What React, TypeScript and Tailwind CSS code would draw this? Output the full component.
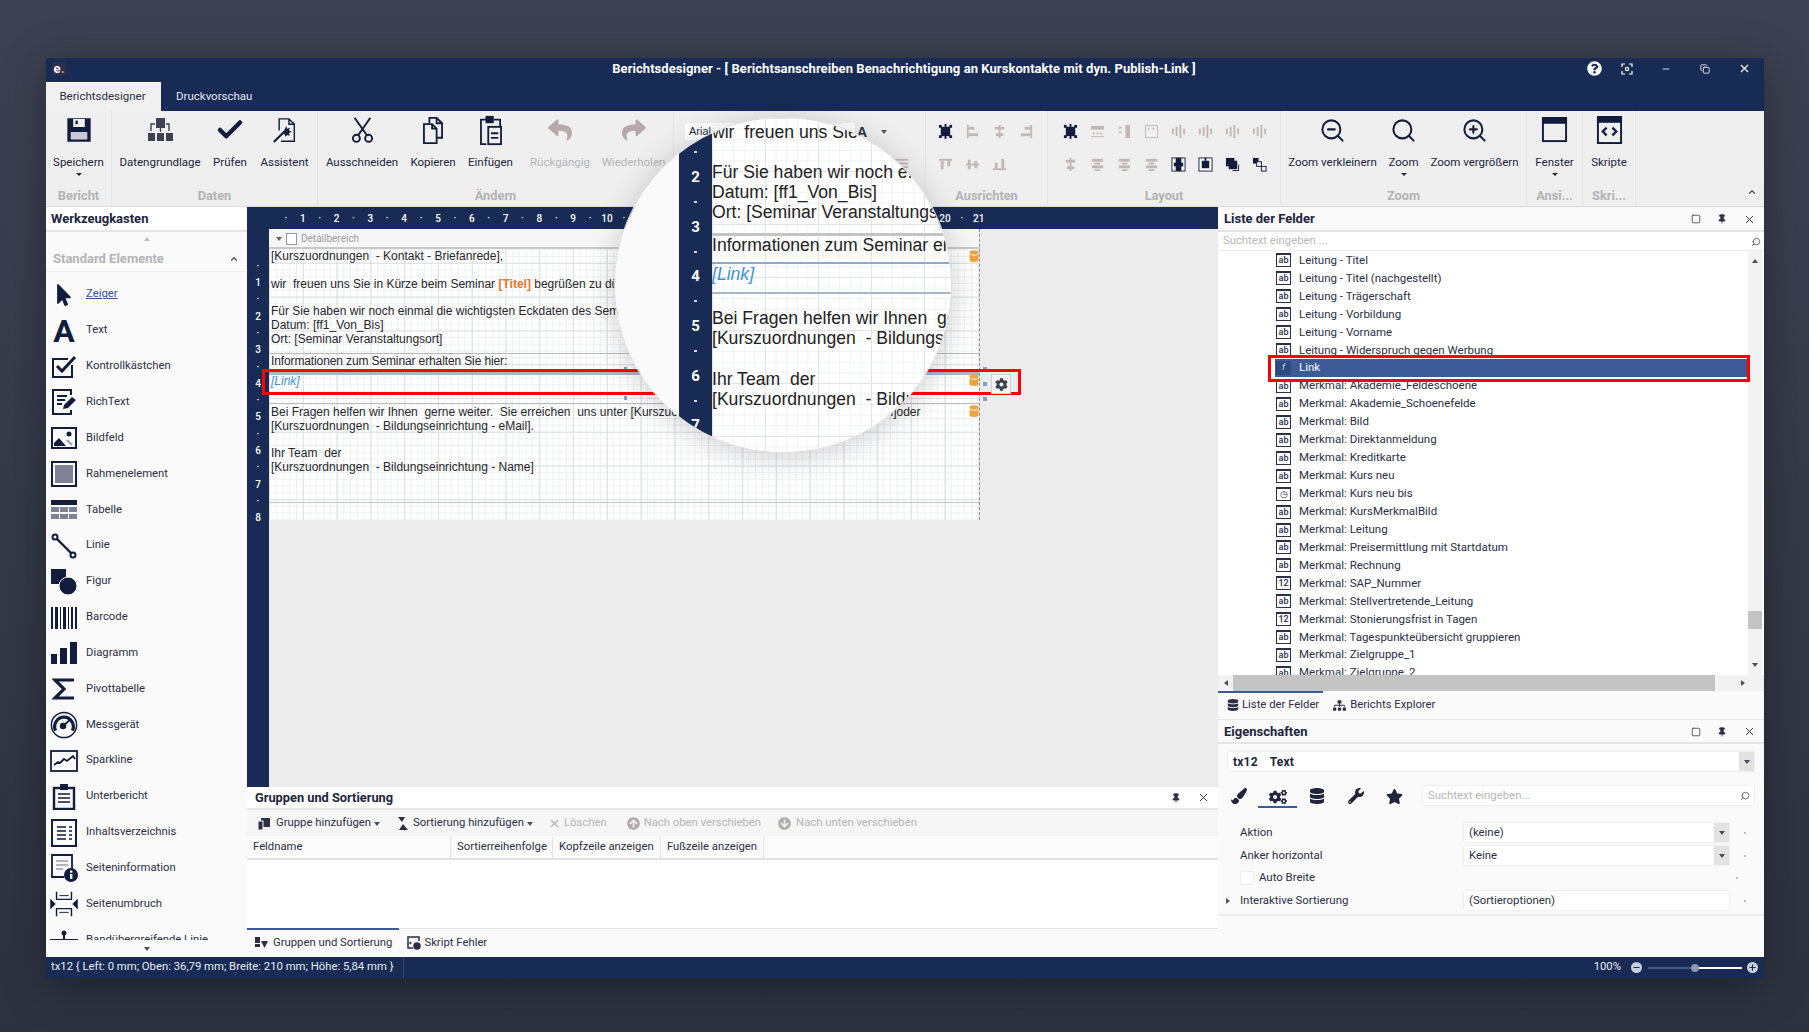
import type { ReactNode } from 'react';
import { Check, Minus, Plus, Search, X, ZoomIn, ZoomOut, Pin, Square, ChevronUp, Copy } from 'lucide-react';
import { FaCog, FaCogs, FaDatabase, FaMousePointer, FaPaintBrush, FaQuestionCircle, FaReply, FaShare, FaStar, FaWrench, FaSitemap, FaArrowCircleUp, FaArrowCircleDown } from 'react-icons/fa';

type R = [number, number, number, number];

// small ribbon glyph built from rects
function Bars({ r, c = '#c2b7b8', frame }: { r: R[]; c?: string; frame?: boolean }) {
  return (
    <svg width="15" height="15" viewBox="0 0 16 16" fill={c} className="shrink-0">
      {frame && <rect x="1" y="1" width="14" height="14" fill="#fff" stroke="#111c3e" />}
      {r.map((b, i) => (
        <rect key={i} x={b[0]} y={b[1]} width={b[2]} height={b[3]} />
      ))}
    </svg>
  );
}

const selIcon: R[] = [[3, 3, 10, 10], [1, 1, 3, 3], [12, 1, 3, 3], [1, 12, 3, 3], [12, 12, 3, 3], [7, 0, 2, 16]];
const hCenter: R[] = [[7, 1, 2, 14], [3, 3, 10, 3], [4, 10, 8, 3]];
const vCenter: R[] = [[1, 7, 14, 2], [3, 3, 3, 10], [10, 4, 3, 8]];
const spread: R[] = [[1, 5, 2, 6], [5, 3, 2, 10], [9, 1, 2, 14], [13, 5, 2, 6]];
const stack: R[] = [[2, 2, 12, 3], [5, 6, 6, 2], [2, 9, 12, 3], [5, 13, 6, 2]];

const ausrichten1: R[][] = [selIcon, [[2, 1, 2, 14], [4, 3, 6, 3], [4, 10, 10, 3]], hCenter, [[12, 1, 2, 14], [6, 3, 6, 3], [2, 10, 10, 3]]];
const ausrichten2: R[][] = [[[1, 2, 14, 2], [3, 4, 3, 9], [10, 4, 3, 6]], vCenter, [[1, 12, 14, 2], [3, 6, 3, 6], [10, 2, 3, 10]]];
const layout1: R[][] = [selIcon, [[1, 2, 14, 4], [3, 9, 2, 2], [7, 9, 2, 2], [11, 9, 2, 2], [1, 13, 14, 1]], [[2, 3, 3, 2], [2, 8, 3, 2], [9, 1, 5, 14]], [[1, 1, 14, 1], [1, 14, 14, 1], [1, 1, 1, 14], [14, 1, 1, 14], [4, 4, 2, 2], [9, 4, 2, 2]], spread, spread, spread, spread];
const layout2: R[][] = [hCenter, stack, stack, stack];

function Floppy() {
  return (
    <svg width="28" height="28" viewBox="0 0 24 24" fill="#111c3e">
      <path fillRule="evenodd" d="M2 2h20v20H2zM7 2.5v7h10v-7zM5 14v6h14v-6z" />
      <rect x="9" y="4" width="2" height="3" />
      <rect x="5" y="14" width="14" height="6" fill="#c9cbd3" />
    </svg>
  );
}
function DataIcon() {
  return (
    <svg width="28" height="28" viewBox="0 0 28 28" fill="#3c4154">
      <rect x="10" y="2" width="9" height="10" />
      <rect x="2" y="17" width="7" height="8" />
      <rect x="11" y="17" width="7" height="8" />
      <rect x="20" y="17" width="7" height="8" />
      <path d="M5 15V8h4M23 15V8h-3M14.5 12v4" fill="none" stroke="#3c4154" strokeWidth="1.4" />
    </svg>
  );
}
function WizardIcon() {
  return (
    <svg width="25" height="27" viewBox="0 0 28 30" fill="none" stroke="#111c3e" strokeWidth="1.6">
      <path d="M8 15V2h11l6 6v19H10M19 2v6h6" />
      <path d="M2 28 14 16" strokeWidth="2.4" />
      <path d="m16 10 1 3 3-1-1 3 3 1-3 2 1 3-3-1-2 2-1-3-3-1 2-2z" fill="#111c3e" stroke="none" />
    </svg>
  );
}
function ScissorsIcon() {
  return (
    <svg width="25" height="28" viewBox="0 0 28 32" fill="none" stroke="#111c3e" strokeWidth="2.2">
      <circle cx="7" cy="25.5" r="4" />
      <circle cx="21" cy="25.5" r="4" />
      <path d="M9 22 23 2M19 22 5 2" />
    </svg>
  );
}
function CopyIcon() {
  return (
    <svg width="24" height="29" viewBox="0 0 26 32" fill="none" stroke="#111c3e" strokeWidth="2">
      <path d="M9 8V2h8l6 6v16h-6" />
      <path d="M3 9h9l5 5v16H3z" fill="#efefef" />
      <path d="M12 9v5h5M17 2v6h6" />
    </svg>
  );
}
function PasteIcon() {
  return (
    <svg width="24" height="31" viewBox="0 0 26 34" fill="none" stroke="#111c3e" strokeWidth="2">
      <path d="M9 5H2v27h6M16 5h7v7" />
      <rect x="8" y="2" width="7" height="6" fill="#111c3e" />
      <rect x="10" y="13" width="14" height="19" fill="#efefef" />
      <path d="M13 20h8M13 25h8" />
    </svg>
  );
}
function WindowIcon({ code }: { code?: boolean }) {
  return (
    <svg width="27" height="31" viewBox="0 0 28 32" fill="none" stroke="#111c3e" strokeWidth="2">
      <rect x="2" y={code ? 2 : 3} width="24" height={code ? 27 : 24} />
      <rect x="2" y={code ? 2 : 3} width="24" height="5" fill="#111c3e" />
      {code && <path d="M11 13l-4 4 4 4M17 13l4 4-4 4" strokeWidth="2.4" />}
    </svg>
  );
}
function FocusIcon() {
  return (
    <svg width="12" height="12" viewBox="0 0 12 12" fill="none" stroke="#fff" strokeWidth="1.2">
      <path d="M1 4V1h3M8 1h3v3M11 8v3H8M4 11H1V8" />
      <circle cx="6" cy="6" r="1.6" />
    </svg>
  );
}

function RibbonBtn({ icon, label, w, off, caret }: { icon: ReactNode; label: string; w: number; off?: boolean; caret?: boolean }) {
  return (
    <div className="flex flex-col items-center shrink-0" style={{ width: w }}>
      <div className="h-[38px] mb-[3px] flex items-center justify-center">{icon}</div>
      <div className={off ? 'text-[11.5px] leading-[20px] whitespace-nowrap text-[#b5b5b8]' : 'text-[11.5px] leading-[20px] whitespace-nowrap text-[#20253c]'}>{label}</div>
      {caret && <div className="w-0 h-0 mt-[1px] border-x-[3px] border-x-transparent border-t-[3px] border-t-[#20253c]" />}
    </div>
  );
}

function Group({ w, label, children, cls }: { w: number; label: string; children: ReactNode; cls?: string }) {
  return (
    <div className="h-full flex flex-col border-r border-[#e6e6e6] shrink-0" style={{ width: w }}>
      <div className={'h-[76px] flex ' + (cls || 'justify-center')}>{children}</div>
      <div className="flex-1 text-center text-[12.8px] font-bold text-[#b3b3b3] leading-[20px] whitespace-nowrap">{label}</div>
    </div>
  );
}

function Tool({ children, label, link }: { children: ReactNode; label: string; link?: boolean }) {
  return (
    <div className="h-[35.85px] flex items-center gap-[8px] pl-[4px] shrink-0">
      <div className="w-[28px] flex justify-center text-[#111c3e]">{children}</div>
      <span className={link ? 'text-[11.3px] text-[#34509c] underline' : 'text-[11.3px] text-[#2b2f45]'}>{label}</span>
    </div>
  );
}

const n = '#111c3e';
const tools: { label: string; icon: ReactNode; link?: boolean }[] = [
  { label: 'Zeiger', link: true, icon: <FaMousePointer size={22} /> },
  { label: 'Text', icon: <span className="text-[32px] leading-none font-bold">A</span> },
  { label: 'Kontrollkästchen', icon: <svg width="26" height="24" viewBox="0 0 26 24" fill="none" stroke={n} strokeWidth="2"><path d="M21 10v12H2V4h15" /><path d="m6 11 5 5L24 2" strokeWidth="3" /></svg> },
  { label: 'RichText', icon: <svg width="26" height="26" viewBox="0 0 26 26" fill="none" stroke={n} strokeWidth="2"><path d="M20 6V1H2v24h18v-4" /><path d="M6 7h10M6 11h8M6 15h5" /><path d="m12 20 1-4 8-8 4 3-8 8z" fill={n} stroke="none" /></svg> },
  { label: 'Bildfeld', icon: <svg width="26" height="22" viewBox="0 0 26 22" fill="none" stroke={n} strokeWidth="2"><rect x="1" y="1" width="24" height="20" /><circle cx="18" cy="7" r="2.5" fill={n} stroke="none" /><path d="M3 19v-3l5-5 7 8z" fill={n} stroke="none" /><path d="m16 13 5 5" stroke="#9a9dab" /></svg> },
  { label: 'Rahmenelement', icon: <svg width="26" height="26" viewBox="0 0 26 26"><rect x="1" y="1" width="24" height="24" fill="#fff" stroke={n} strokeWidth="2" /><rect x="4" y="4" width="18" height="18" fill="#7d8294" /></svg> },
  { label: 'Tabelle', icon: <svg width="26" height="20" viewBox="0 0 26 20" fill="#7d8294"><rect width="26" height="5" fill={n} /><rect y="7" width="8" height="5" /><rect x="9" y="7" width="8" height="5" /><rect x="18" y="7" width="8" height="5" /><rect y="14" width="8" height="5" /><rect x="9" y="14" width="8" height="5" /><rect x="18" y="14" width="8" height="5" /></svg> },
  { label: 'Linie', icon: <svg width="26" height="26" viewBox="0 0 26 26" fill="#fff" stroke={n} strokeWidth="2"><path d="m5 5 16 16" strokeWidth="2.4" /><circle cx="4" cy="4" r="2.5" /><circle cx="22" cy="22" r="2.5" /></svg> },
  { label: 'Figur', icon: <svg width="26" height="26" viewBox="0 0 26 26" fill={n}><rect width="15" height="15" /><circle cx="17" cy="17" r="9" stroke="#fafafa" /></svg> },
  { label: 'Barcode', icon: <svg width="26" height="22" viewBox="0 0 26 22" fill={n}><rect x="0" width="2" height="22" /><rect x="4" width="3" height="22" /><rect x="9" width="1" height="22" /><rect x="12" width="3" height="22" /><rect x="17" width="1" height="22" /><rect x="20" width="2" height="22" /><rect x="24" width="2" height="22" /></svg> },
  { label: 'Diagramm', icon: <svg width="26" height="22" viewBox="0 0 26 22" fill={n}><rect y="12" width="6" height="10" /><rect x="9" y="6" width="7" height="16" /><rect x="19" width="7" height="22" /></svg> },
  { label: 'Pivottabelle', icon: <svg width="24" height="24" viewBox="0 0 24 24" fill="none" stroke={n} strokeWidth="3.2"><path d="M22 3H3l9 9-9 9h19" /></svg> },
  { label: 'Messgerät', icon: <svg width="30" height="30" viewBox="0 0 30 30" fill="none" stroke={n}><circle cx="15" cy="15" r="13.5" strokeWidth="1.6" /><path d="M6 21a10 10 0 1 1 18 0" strokeWidth="3.4" /><circle cx="14" cy="16" r="3.5" fill={n} stroke="none" /><path d="m15 15 7-6" strokeWidth="2" /></svg> },
  { label: 'Sparkline', icon: <svg width="28" height="22" viewBox="0 0 28 22" fill="none" stroke={n} strokeWidth="1.8"><rect x="1" y="1" width="26" height="20" /><path d="m4 15 4-3 2 1 4-4 3 2 6-5 2 3" /></svg> },
  { label: 'Unterbericht', icon: <svg width="24" height="26" viewBox="0 0 24 26" fill="none" stroke={n} strokeWidth="2.4"><rect x="2" y="4" width="20" height="21" /><rect x="8" y="0" width="8" height="6" fill={n} stroke="none" /><path d="M6 10h12M6 14h12M6 18h12" strokeWidth="1.4" /></svg> },
  { label: 'Inhaltsverzeichnis', icon: <svg width="26" height="28" viewBox="0 0 26 28" fill="none" stroke={n} strokeWidth="2"><rect x="1" y="1" width="24" height="26" /><path d="M6 8h9M6 12h9M6 16h9M6 20h9M18 8h3M18 12h3M18 16h3M18 20h3" strokeWidth="1.4" /></svg> },
  { label: 'Seiteninformation', icon: <svg width="28" height="28" viewBox="0 0 28 28" fill="none" stroke={n} strokeWidth="1.8"><path d="M22 15V1H2v22h12" /><path d="M6 7h12M6 11h12M6 15h7" strokeWidth="1.2" stroke="#6b6f82" /><circle cx="21" cy="21" r="7" fill={n} stroke="none" /><rect x="20" y="20" width="2.4" height="5" fill="#fff" stroke="none" /><rect x="20" y="16.5" width="2.4" height="2.2" fill="#fff" stroke="none" /></svg> },
  { label: 'Seitenumbruch', icon: <svg width="30" height="28" viewBox="0 0 30 28" fill="none" stroke={n} strokeWidth="1.5"><path d="M7 1v8h16V1M7 27v-8h16v8" /><path d="M10 5h10M10 23h10" strokeWidth="1" /><path d="m1 10 4 4-4 4zM29 10l-4 4 4 4z" fill={n} /></svg> },
  { label: 'Bandübergreifende Linie', icon: <svg width="28" height="20" viewBox="0 0 28 20" fill={n}><circle cx="14" cy="3" r="2.5" /><rect x="13" y="3" width="2" height="8" /><rect y="9" width="28" height="3" /><rect y="14" width="28" height="3" /></svg> },
];

function AbIcon({ t = 'ab' }: { t?: string }) {
  return (
    <div className="w-[15px] h-[14px] shrink-0 border border-[#2a3048] border-t-[2px] text-[9px] leading-[10px] font-medium text-center text-[#2a3048] bg-white">{t}</div>
  );
}

const fields: { t: string; k?: string; sel?: boolean }[] = [
  { t: 'Leitung - Titel' },
  { t: 'Leitung - Titel (nachgestellt)' },
  { t: 'Leitung - Trägerschaft' },
  { t: 'Leitung - Vorbildung' },
  { t: 'Leitung - Vorname' },
  { t: 'Leitung - Widerspruch gegen Werbung' },
  { t: 'Link', k: 'f', sel: true },
  { t: 'Merkmal: Akademie_Feldeschoene' },
  { t: 'Merkmal: Akademie_Schoenefelde' },
  { t: 'Merkmal: Bild' },
  { t: 'Merkmal: Direktanmeldung' },
  { t: 'Merkmal: Kreditkarte' },
  { t: 'Merkmal: Kurs neu' },
  { t: 'Merkmal: Kurs neu bis', k: '◷' },
  { t: 'Merkmal: KursMerkmalBild' },
  { t: 'Merkmal: Leitung' },
  { t: 'Merkmal: Preisermittlung mit Startdatum' },
  { t: 'Merkmal: Rechnung' },
  { t: 'Merkmal: SAP_Nummer', k: '12' },
  { t: 'Merkmal: Stellvertretende_Leitung' },
  { t: 'Merkmal: Stonierungsfrist in Tagen', k: '12' },
  { t: 'Merkmal: Tagespunkteübersicht gruppieren' },
  { t: 'Merkmal: Zielgruppe_1' },
  { t: 'Merkmal: Zielgruppe_2' },
];

function PanelBtns({ max = true }: { max?: boolean }) {
  return (
    <div className="flex items-center gap-[16px] text-[#2a3048]">
      {max && <Square size={10} strokeWidth={1.8} />}
      <Pin size={10} fill="#2a3048" />
      <X size={13} strokeWidth={1.8} />
    </div>
  );
}

function Tri({ dir, c = '#4a4e5e' }: { dir: 'up' | 'down' | 'left' | 'right'; c?: string }) {
  const cls = {
    up: 'border-x-[3.5px] border-x-transparent border-b-[4px]',
    down: 'border-x-[3.5px] border-x-transparent border-t-[4px]',
    left: 'border-y-[3.5px] border-y-transparent border-r-[4px]',
    right: 'border-y-[3.5px] border-y-transparent border-l-[4px]',
  }[dir];
  return <div className={'w-0 h-0 ' + cls} style={{ borderBottomColor: dir === 'up' ? c : undefined, borderTopColor: dir === 'down' ? c : undefined, borderRightColor: dir === 'left' ? c : undefined, borderLeftColor: dir === 'right' ? c : undefined }} />;
}

function Db() {
  return (
    <svg width="10" height="12" viewBox="0 0 10 12" fill="#f0a23c"><ellipse cx="5" cy="2.5" rx="4.5" ry="2.2" /><path d="M.5 4v6c0 1.200 2 2 4.5 2s4.500-.8 4.500-2V4c-1 1-2.500 1.500-4.500 1.500S1.500 5 .5 4z" /></svg>
  );
}

function Prop({ label, value, caret, indent }: { label: string; value?: string; caret?: boolean; indent?: boolean }) {
  return (
    <div className="h-[23px] flex items-center shrink-0">
      <div className="w-[12px] flex justify-center ml-[4px]">{indent && <Tri dir="right" c="#555" />}</div>
      <div className="w-[230px] pl-[6px] text-[11.4px] text-[#2b2f45]">{label}</div>
      <div className="w-[265px] h-[19px] bg-white shadow-[0_0_2px_#ddd] flex items-center justify-between pl-[5px] text-[11.4px] text-[#2b2f45]">
        {value}
        {caret && <div className="w-[15px] h-full bg-[#e2e2e2] flex items-center justify-center"><Tri dir="down" /></div>}
      </div>
      <div className="w-[2px] h-[2px] rounded-full bg-[#aaa] ml-[15px]" />
    </div>
  );
}

const rulerNums = Array.from({ length: 21 }, (_, i) => i + 1);
const vRuler = [1, 2, 3, 4, 5, 6, 7, 8];

const gridBg = 'bg-white bg-[linear-gradient(#dfe0e4_1px,transparent_1px),linear-gradient(90deg,#dfe0e4_1px,transparent_1px),linear-gradient(#eff0f2_1px,transparent_1px),linear-gradient(90deg,#eff0f2_1px,transparent_1px)] [background-size:33.8px_33.8px,33.8px_33.8px,6.76px_6.76px,6.76px_6.76px]';
const gridBigBg = 'bg-white bg-[linear-gradient(#e2e3e7_1px,transparent_1px),linear-gradient(90deg,#e2e3e7_1px,transparent_1px),linear-gradient(#f1f2f4_1px,transparent_1px),linear-gradient(90deg,#f1f2f4_1px,transparent_1px)] [background-size:53px_53px,53px_53px,10.6px_10.6px,10.6px_10.6px]';

const reportFont = "font-['Liberation_Sans',Arial,sans-serif]";

function Magnifier() {
  const marks: (number | null)[] = [null, 2, null, 3, null, 4, null, 5, null, 6, null, 7, null];
  return (
    <div className="absolute left-[614px] top-[117px] w-[338px] h-[336px] rounded-full overflow-hidden flex border border-[#dcdcdc] shadow-[0_4px_30px_rgba(0,0,0,0.18)] z-20">
      <div className="w-[64px] shrink-0 bg-[#fafafa]" />
      <div className="w-[33px] shrink-0 bg-[#172b55] pt-[22px] flex flex-col text-white font-bold text-[15px]">
        {marks.map((m, i) => (
          <div key={i} className="h-[24.85px] flex items-center justify-center shrink-0">{m ?? <span className="w-[3px] h-[2px] bg-white/80" />}</div>
        ))}
      </div>
      <div className={'flex-1 pt-[4px] text-[17.6px] leading-[20px] text-[#222] whitespace-pre overflow-hidden ' + gridBigBg + ' ' + reportFont}>
        <div className="h-[20px]">wir  freuen uns Sie</div>
        <div className="h-[20px]" />
        <div className="h-[20px]">Für Sie haben wir noch e.</div>
        <div className="h-[20px]">Datum: [ff1_Von_Bis]</div>
        <div className="h-[20px]">Ort: [Seminar Veranstaltungs</div>
        <div className="mt-[11px] h-[3px] bg-[#c4c4c4]" />
        <div className="h-[20px] -mt-[1px]">Informationen zum Seminar er</div>
        <div className="mt-[7px] h-[2px] bg-[#8fa8cc]" />
        <div className="h-[20px] italic text-[#3f92d8]">[Link]</div>
        <div className="mt-[8px] h-[2px] bg-[#a9b5c8]" />
        <div className="mt-[14px] h-[20px]">Bei Fragen helfen wir Ihnen  ge</div>
        <div className="h-[20px]">[Kurszuordnungen  - Bildungse</div>
        <div className="h-[21px]" />
        <div className="h-[20px]">Ihr Team  der</div>
        <div className="h-[20px]">[Kurszuordnungen  - Bildu</div>
      </div>
    </div>
  );
}

export default function App() {
  return (
    <div className="relative w-[1809px] h-[1032px] overflow-hidden pt-[58px] pl-[46px] bg-gradient-to-b from-[#3d4252] to-[#2d3240] font-[Roboto,sans-serif]">
      <div className="w-[1718px] h-[920px] flex flex-col shadow-[0_8px_40px_rgba(0,0,0,0.35)]">
        {/* title + tabs */}
        <div className="h-[53px] bg-[#172b55] shrink-0 flex flex-col">
          <div className="h-[22px] mb-[2px] flex items-center relative">
            <div className="ml-[6px] w-[14px] h-[14px] rounded-[2px] bg-[#2c2f4a] text-white text-[13px] font-bold leading-[13px] text-center">e<span className="text-[#f0a23c]">.</span></div>
            <div className="w-[1676px] text-center text-[13px] font-bold text-white whitespace-nowrap tracking-[0.06px]">Berichtsdesigner - [ Berichtsanschreiben Benachrichtigung an Kurskontakte mit dyn. Publish-Link ]</div>
            <div className="absolute right-[13px] top-[3px] flex items-center text-white">
              <FaQuestionCircle size={15} className="mr-[19.5px]" />
              <FocusIcon />
              <Minus size={10} className="ml-[28px] mr-[29px]" />
              <Copy size={10} className="mr-[28px]" />
              <X size={13} />
            </div>
          </div>
          <div className="h-[29px] flex items-stretch text-[11.5px]">
            <div className="w-[115px] pr-[2px] bg-[#f0f0f0] border-t border-white text-[#2b2f45] flex items-center justify-center">Berichtsdesigner</div>
            <div className="ml-[15px] text-[#e4e7ef] flex items-center">Druckvorschau</div>
          </div>
        </div>

        {/* ribbon */}
        <div className="h-[96px] shrink-0 bg-[#efefef] flex border-b border-[#dcdcdc]">
          <Group w={66} label="Bericht"><RibbonBtn w={52} icon={<Floppy />} label="Speichern" caret /></Group>
          <Group w={206} label="Daten" cls="justify-center gap-[13px]">
            <RibbonBtn w={80} icon={<DataIcon />} label="Datengrundlage" />
            <RibbonBtn w={34} icon={<Check size={30} strokeWidth={3.6} color="#111c3e" />} label="Prüfen" />
            <RibbonBtn w={49} icon={<WizardIcon />} label="Assistent" />
          </Group>
          <Group w={356} label="Ändern" cls="pl-[8px] gap-[13px]">
            <RibbonBtn w={72} icon={<ScissorsIcon />} label="Ausschneiden" />
            <RibbonBtn w={44} icon={<CopyIcon />} label="Kopieren" />
            <RibbonBtn w={45} icon={<PasteIcon />} label="Einfügen" />
            <RibbonBtn w={68} off icon={<FaReply size={24} color="#b5a9aa" />} label="Rückgängig" />
            <RibbonBtn w={53} off icon={<FaShare size={24} color="#b5a9aa" />} label="Wiederholen" />
          </Group>
          <Group w={252} label="Schrift" cls="flex-col pl-[11px] pr-[16px] pt-[12px]">
            <div className="flex items-center h-[17px]">
              <div className="w-[170px] h-[17px] bg-white text-[11px] leading-[17px] pl-[4px] text-[#2b2f45] font-['Liberation_Sans',sans-serif]">Arial</div>
              <div className="ml-[2px] text-[14px] font-bold text-[#2b2f45] leading-none font-['Liberation_Sans',sans-serif]">A</div>
              <div className="ml-[14px]"><Tri dir="down" c="#555" /></div>
            </div>
            <div className="mt-[16px] ml-auto"><Bars r={[[1, 3, 14, 2], [1, 7, 14, 2], [1, 11, 14, 2]]} /></div>
          </Group>
          <Group w={122} label="Ausrichten" cls="flex-col pl-[12px] pt-[13px] gap-[18px]">
            <div className="flex gap-[12px]">{ausrichten1.map((r, i) => <Bars key={i} r={r} c={i === 0 ? '#111c3e' : undefined} />)}</div>
            <div className="flex gap-[12px]">{ausrichten2.map((r, i) => <Bars key={i} r={r} />)}</div>
          </Group>
          <Group w={233} label="Layout" cls="flex-col pl-[15px] pt-[13px] gap-[18px]">
            <div className="flex gap-[12px]">{layout1.map((r, i) => <Bars key={i} r={r} c={i === 0 ? '#111c3e' : undefined} />)}</div>
            <div className="flex gap-[12px]">
              {layout2.map((r, i) => <Bars key={i} r={r} />)}
              <Bars frame c="#111c3e" r={[[5, 1, 6, 14], [3, 6, 10, 4]]} />
              <Bars frame c="#111c3e" r={[[4, 4, 8, 8], [7, 1, 2, 3]]} />
              <Bars c="#111c3e" r={[[1, 1, 9, 9], [4, 4, 9, 9], [14, 8, 1, 7], [8, 14, 6, 1]]} />
              <svg width="15" height="15" viewBox="0 0 16 16" fill="#111c3e" className="shrink-0"><rect x="1" y="1" width="6" height="6" /><rect x="5" y="5" width="5" height="5" fill="#efefef" stroke="#111c3e" /><rect x="10" y="10" width="5" height="5" fill="#efefef" stroke="#111c3e" /></svg>
            </div>
          </Group>
          <Group w={246} label="Zoom" cls="justify-center gap-[13px]">
            <RibbonBtn w={87} icon={<ZoomOut size={27} strokeWidth={1.8} color="#111c3e" />} label="Zoom verkleinern" />
            <RibbonBtn w={29} icon={<Search size={27} strokeWidth={1.8} color="#111c3e" />} label="Zoom" caret />
            <RibbonBtn w={87} icon={<ZoomIn size={27} strokeWidth={1.8} color="#111c3e" />} label="Zoom vergrößern" />
          </Group>
          <Group w={56} label="Ansi..."><RibbonBtn w={42} icon={<WindowIcon />} label="Fenster" caret /></Group>
          <Group w={53} label="Skri..."><RibbonBtn w={40} icon={<WindowIcon code />} label="Skripte" /></Group>
          <div className="flex-1 flex justify-end items-end pr-[7px] pb-[9px]"><ChevronUp size={10} strokeWidth={3} color="#555" /></div>
        </div>

        {/* main */}
        <div className="h-[750px] shrink-0 flex">
          {/* Werkzeugkasten */}
          <div className="w-[201px] shrink-0 bg-[#fafafa] flex flex-col">
            <div className="h-[25px] shrink-0 flex items-center pl-[5px] text-[13px] font-bold text-[#20253c] bg-white border-b-2 border-[#e4e4e4]">Werkzeugkasten</div>
            <div className="h-[14px] shrink-0 flex items-center justify-center"><Tri dir="up" c="#bbb" /></div>
            <div className="h-[26px] shrink-0 flex items-center justify-between pl-[7px] pr-[8px] border-b border-[#efefef] text-[13px] font-bold text-[#b4b4b6] mb-[5px]">
              <span>Standard Elemente</span>
              <ChevronUp size={10} strokeWidth={3} color="#555" />
            </div>
            <div className="flex-1 overflow-hidden flex flex-col">
              {tools.map((t) => (
                <Tool key={t.label} label={t.label} link={t.link}>{t.icon}</Tool>
              ))}
            </div>
            <div className="h-[17px] shrink-0 flex items-center justify-center"><Tri dir="down" /></div>
          </div>

          {/* canvas column */}
          <div className="w-[971px] shrink-0 flex flex-col">
            <div className="h-[22px] shrink-0 bg-[#172b55] pl-[22px] flex text-white text-[10px] font-medium items-center">
              {rulerNums.map((i) => (
                <div key={i} className="w-[33.8px] shrink-0 flex items-center justify-end">
                  <span className="flex-1 text-center leading-none">·</span>
                  <span className="w-0 flex justify-center">{i}</span>
                </div>
              ))}
            </div>
            <div className="h-[558px] shrink-0 flex">
              <div className="w-[22px] shrink-0 bg-[#172b55] pt-[20px] overflow-hidden flex flex-col text-white text-[10px] font-medium">
                {vRuler.map((i) => (
                  <div key={i} className="h-[33.6px] shrink-0 flex flex-col items-center justify-end">
                    <span className="flex-1 flex items-center leading-none">·</span>
                    <span className="h-0 flex items-center">{i}</span>
                  </div>
                ))}
              </div>
              <div className="flex-1 bg-[#ececec]">
                <div className={'relative w-[711px] h-[291px] border-r border-dashed border-[#8f8f8f] text-[12px] leading-[13.75px] text-[#26262c] ' + gridBg + ' ' + reportFont}>
                  <div className="h-[20px] pt-[1px] border-b-2 border-[#c8c8c8] bg-[#f6f6f6] flex items-center pl-[7px] gap-[4px] font-[Roboto,sans-serif] text-[10px] text-[#9b9b9f]">
                    <Tri dir="down" c="#666" />
                    <div className="w-[11px] h-[12px] border border-[#8f9bb3] bg-white" />
                    Detailbereich
                  </div>
                  <div className="pl-[2px] pt-[1px] h-[104px] whitespace-pre">
                    <div className="h-[13.75px]">[Kurszuordnungen  - Kontakt - Briefanrede],</div>
                    <div className="h-[13.75px]" />
                    <div className="h-[13.75px]">wir  freuen uns Sie in Kürze beim Seminar <span className="text-[#e8762c] font-bold">[Titel]</span> begrüßen zu dürfen.</div>
                    <div className="h-[13.75px]" />
                    <div className="h-[13.75px]">Für Sie haben wir noch einmal die wichtigsten Eckdaten des Seminars zusammengestellt.</div>
                    <div className="h-[13.75px]">Datum: [ff1_Von_Bis]</div>
                    <div className="h-[13.75px]">Ort: [Seminar Veranstaltungsort]</div>
                  </div>
                  <div className="border-t border-[#b9b9b9] pl-[2px] pt-[1px] h-[19px] tracking-[-0.12px]">Informationen zum Seminar erhalten Sie hier:</div>
                  <div className="h-[3px] bg-[#a9b5c8]" />
                  <div className="h-[29px] pl-[2px] italic text-[#3f92d8] border-b border-[#b9b9b9]">[Link]</div>
                  <div className="pl-[2px] pt-[2px] whitespace-pre h-[99px] border-b border-[#c3c3c3]">
                    <div className="h-[13.75px] pr-[64px] flex justify-between"><span>Bei Fragen helfen wir Ihnen  gerne weiter.  Sie erreichen  uns unter [Kurszuordnungen - Bildungseinrichtung - Telefon]</span><span>oder</span></div>
                    <div className="h-[13.75px]">[Kurszuordnungen  - Bildungseinrichtung - eMail].</div>
                    <div className="h-[13.75px]" />
                    <div className="h-[13.75px]">Ihr Team  der</div>
                    <div className="h-[13.75px]">[Kurszuordnungen  - Bildungseinrichtung - Name]</div>
                  </div>

                  {/* overlays on the design surface */}
                  <div className="absolute left-[700px] top-[21px]"><Db /></div>
                  <div className="absolute left-[700px] top-[145px]"><Db /></div>
                  <div className="absolute left-[700px] top-[176px]"><Db /></div>
                  <div className="absolute -left-[7px] top-[140px] w-[759px] h-[26px] border-[3px] border-[#f00] z-10" />
                  <div className="absolute left-[355px] top-[138px] w-[3px] h-[4px] bg-[#7d9cd0]" />
                  <div className="absolute left-[355px] top-[167px] w-[3px] h-[4px] bg-[#7d9cd0]" />
                  <div className="absolute left-[714px] top-[153px] w-[4px] h-[4px] bg-[#7d9cd0] z-10" />
                  <div className="absolute left-[714px] top-[138px] w-[4px] h-[4px] bg-[#7d9cd0]" />
                  <div className="absolute left-[714px] top-[168px] w-[4px] h-[4px] bg-[#7d9cd0]" />
                  <div className="absolute left-[722px] top-[145px] w-[20px] h-[20px] border border-[#d0d0d0] bg-[#f3f3f3] flex items-center justify-center text-[#3a3f50] z-10"><FaCog size={13} /></div>
                </div>
              </div>
            </div>

            {/* Gruppen und Sortierung */}
            <div className="h-[170px] shrink-0 flex flex-col bg-white">
              <div className="h-[23px] shrink-0 flex items-center justify-between pl-[8px] pr-[8px] text-[12.8px] font-bold text-[#20253c] border-b-2 border-[#e6e6e6]">
                Gruppen und Sortierung
                <PanelBtns max={false} />
              </div>
              <div className="h-[26px] pt-[1px] shrink-0 bg-[#f6f6f6] flex items-center pl-[11px] text-[11.3px] text-[#2b2f45] whitespace-nowrap">
                <svg width="12" height="12" viewBox="0 0 12 12" fill="#2b2f45" className="mr-[6px]"><rect x="3" y="0" width="9" height="9" /><rect x="0" y="3" width="5" height="9" stroke="#f6f6f6" /></svg>
                Gruppe hinzufügen
                <div className="ml-[3px] mr-[17px]"><Tri dir="down" /></div>
                <svg width="12" height="13" viewBox="0 0 12 13" fill="#2b2f45" className="mr-[4px]"><path d="M1 0h7L5 5zM6 7l5 6H2z" /></svg>
                Sortierung hinzufügen
                <div className="ml-[3px] mr-[15px]"><Tri dir="down" /></div>
                <X size={13} color="#b0b0b2" className="mr-[3px]" />
                <span className="text-[#b5b5b8] mr-[20px]">Löschen</span>
                <FaArrowCircleUp size={13} color="#b5a9aa" className="mr-[4px]" />
                <span className="text-[#b5b5b8] mr-[17px]">Nach oben verschieben</span>
                <FaArrowCircleDown size={13} color="#b5a9aa" className="mr-[5px]" />
                <span className="text-[#b5b5b8]">Nach unten verschieben</span>
              </div>
              <div className="h-[24px] pt-[1px] shrink-0 flex text-[11.3px] text-[#2b2f45] border-b-2 border-[#e2e2e2] bg-[#fbfbfb]">
                <div className="w-[204px] pl-[6px] border-r border-[#e2e2e2] flex items-center">Feldname</div>
                <div className="w-[102px] pl-[6px] border-r border-[#e2e2e2] flex items-center">Sortierreihenfolge</div>
                <div className="w-[108px] pl-[6px] border-r border-[#e2e2e2] flex items-center">Kopfzeile anzeigen</div>
                <div className="w-[103px] pl-[6px] border-r border-[#e2e2e2] flex items-center">Fußzeile anzeigen</div>
              </div>
              <div className="h-[68px] shrink-0 bg-white" />
              <div className="h-[29px] shrink-0 flex items-center text-[11.3px] text-[#2b2f45] bg-[#fafafa] border-t border-[#e2e2e2] relative">
                <div className="absolute left-0 -top-px w-[152px] h-[2px] bg-[#3c5a96]" />
                <svg width="13" height="12" viewBox="0 0 13 12" fill="#2b2f45" className="ml-[8px] mr-[5px]"><rect width="5" height="6" /><rect y="7" width="5" height="3" /><path d="M6 4h7l-3.5 7z" /></svg>
                Gruppen und Sortierung
                <svg width="14" height="14" viewBox="0 0 14 14" fill="none" stroke="#2b2f45" strokeWidth="1.5" className="ml-[15px] mr-[3px]"><path d="M12 5V1H1v11h5M4 6 3 7l1 1" /><circle cx="10" cy="10" r="3" fill="#2b2f45" /></svg>
                Skript Fehler
              </div>
            </div>
          </div>

          {/* right column */}
          <div className="w-[546px] shrink-0 flex flex-col bg-white">
            <div className="h-[25px] pt-[1px] shrink-0 flex items-center justify-between pl-[6px] pr-[8px] text-[13px] font-bold text-[#20253c] bg-[#fafafa] border-b-2 border-[#e4e4e4]">
              Liste der Felder
              <PanelBtns />
            </div>
            <div className="h-[19px] pt-[1px] shrink-0 flex items-center justify-between pl-[5px] pr-[3px] text-[11.3px] text-[#b8b8ba] border-b border-[#ececec]">
              Suchtext eingeben ...
              <Search size={10} color="#555" className="-scale-x-100" />
            </div>
            <div className="h-[424px] shrink-0 flex relative">
              <div className="flex-1 overflow-hidden pt-[0.5px]">
                {fields.map((f) => (
                  <div key={f.t} className={f.sel ? 'h-[17.95px] ml-[57px] bg-[#3c5a96] text-white flex items-center gap-[8px] pl-[1px] text-[11.5px]' : 'h-[17.95px] ml-[57px] text-[#2b2f45] flex items-center gap-[8px] pl-[1px] text-[11.5px]'}>
                    {f.k === 'f' ? (
                      <div className="w-[15px] h-[14px] bg-[#2f4880] text-center text-[9px] italic leading-[13px] text-[#cfd8ea]">f</div>
                    ) : (
                      <AbIcon t={f.k || 'ab'} />
                    )}
                    {f.t}
                  </div>
                ))}
              </div>
              <div className="w-[14px] shrink-0 bg-[#f2f2f2] mr-[2px] flex flex-col items-center justify-between py-[8px] relative">
                <Tri dir="up" />
                <div className="absolute left-0 top-[360px] w-full h-[18px] bg-[#c4c4c4]" />
                <Tri dir="down" />
              </div>
              <div className="absolute left-[50px] top-[104px] w-[482px] h-[27px] border-[3px] border-[#f00]" />
            </div>
            <div className="h-[16px] shrink-0 flex items-center bg-[#f2f2f2] pl-[6px] pr-[19px] gap-[5px]">
              <Tri dir="left" />
              <div className="w-[482px] h-full bg-[#c4c4c4]" />
              <div className="flex-1" />
              <Tri dir="right" />
            </div>
            <div className="h-[29px] shrink-0 flex items-center text-[11.3px] text-[#2b2f45] bg-[#fafafa] border-b border-[#e6e6e6] relative">
              <div className="absolute left-0 top-0 w-[105px] h-[2px] bg-[#3c5a96]" />
              <FaDatabase size={12} color="#2b2f45" className="ml-[9px] mr-[3px]" />
              Liste der Felder
              <FaSitemap size={13} color="#2b2f45" className="ml-[14px] mr-[4px]" />
              Berichts Explorer
            </div>
            <div className="h-[24px] pt-[1px] shrink-0 flex items-center justify-between pl-[6px] pr-[8px] text-[13px] font-bold text-[#20253c] border-b-2 border-[#e4e4e4] bg-[#fafafa]">
              Eigenschaften
              <PanelBtns />
            </div>
            <div className="flex-1 bg-[#fafafa] flex flex-col pt-[8px]">
              <div className="ml-[10px] w-[526px] h-[19px] shrink-0 bg-white shadow-[0_0_2px_#ddd] flex items-center justify-between pl-[5px] text-[12px] font-bold text-[#20253c] tracking-[0.2px]">
                <span><span className="mr-[12px]">tx12</span>Text</span>
                <div className="w-[15px] h-full bg-[#e2e2e2] flex items-center justify-center"><Tri dir="down" /></div>
              </div>
              <div className="mt-[13px] h-[24px] shrink-0 flex items-start text-[#20253c]">
                <div className="w-[39px] ml-[1px] h-[24px] flex justify-center pt-[4px]"><FaPaintBrush size={16} /></div>
                <div className="w-[39px] h-[24px] flex justify-center pt-[4px] border-b-2 border-[#3c5a96]"><FaCogs size={18} /></div>
                <div className="w-[39px] h-[24px] flex justify-center pt-[4px]"><FaDatabase size={16} /></div>
                <div className="w-[39px] h-[24px] flex justify-center pt-[4px]"><FaWrench size={16} /></div>
                <div className="w-[39px] h-[24px] flex justify-center pt-[4px]"><FaStar size={17} /></div>
                <div className="ml-[9px] w-[331px] h-[19px] mt-[2px] bg-white shadow-[0_0_2px_#ddd] flex items-center justify-between pl-[5px] pr-[4px] text-[11.4px] text-[#b8b8ba]">
                  Suchtext eingeben...
                  <Search size={10} color="#555" className="-scale-x-100" />
                </div>
              </div>
              <div className="mt-[13px] pb-[2px] border-b-2 border-[#ececec] flex flex-col">
                <Prop label="Aktion" value="(keine)" caret />
                <Prop label="Anker horizontal" value="Keine" caret />
                <div className="h-[22px] flex items-center shrink-0">
                  <div className="w-[16px]" />
                  <div className="ml-[6px] w-[14px] h-[14px] bg-white border border-[#eeeeee]" />
                  <div className="w-[479px] pl-[5px] text-[11.4px] text-[#2b2f45]">Auto Breite</div>
                  <div className="w-[2px] h-[2px] rounded-full bg-[#aaa] ml-[3px]" />
                </div>
                <Prop label="Interaktive Sortierung" value="(Sortieroptionen)" indent />
              </div>
            </div>
          </div>
        </div>

        {/* status bar */}
        <div className="h-[21px] shrink-0 bg-[#172b55] flex items-center text-[11.3px] text-[#e8ebf2]">
          <div className="w-[358px] pl-[5px] border-r border-[#31456f] h-full flex items-center whitespace-nowrap">{'tx12 { Left: 0 mm; Oben: 36,79 mm; Breite: 210 mm; Höhe: 5,84 mm }'}</div>
          <div className="ml-auto mr-[6.5px] flex items-center">
            <span className="mr-[9.5px]">100%</span>
            <div className="w-[11px] h-[11px] rounded-full bg-[#c9cfdd] flex items-center justify-center mr-[6.5px]"><Minus size={9} color="#172b55" strokeWidth={3} /></div>
            <div className="w-[94px] h-[2px] bg-[#47587c] flex items-center relative mr-[4.5px]">
              <div className="absolute left-[47px] w-[47px] h-[2px] bg-white" />
              <div className="absolute left-[43px] w-[8px] h-[8px] rounded-full bg-[#8d98b2]" />
            </div>
            <div className="w-[11px] h-[11px] rounded-full bg-[#c9cfdd] flex items-center justify-center"><Plus size={9} color="#172b55" strokeWidth={3} /></div>
          </div>
        </div>
      </div>
      <Magnifier />
    </div>
  );
}
